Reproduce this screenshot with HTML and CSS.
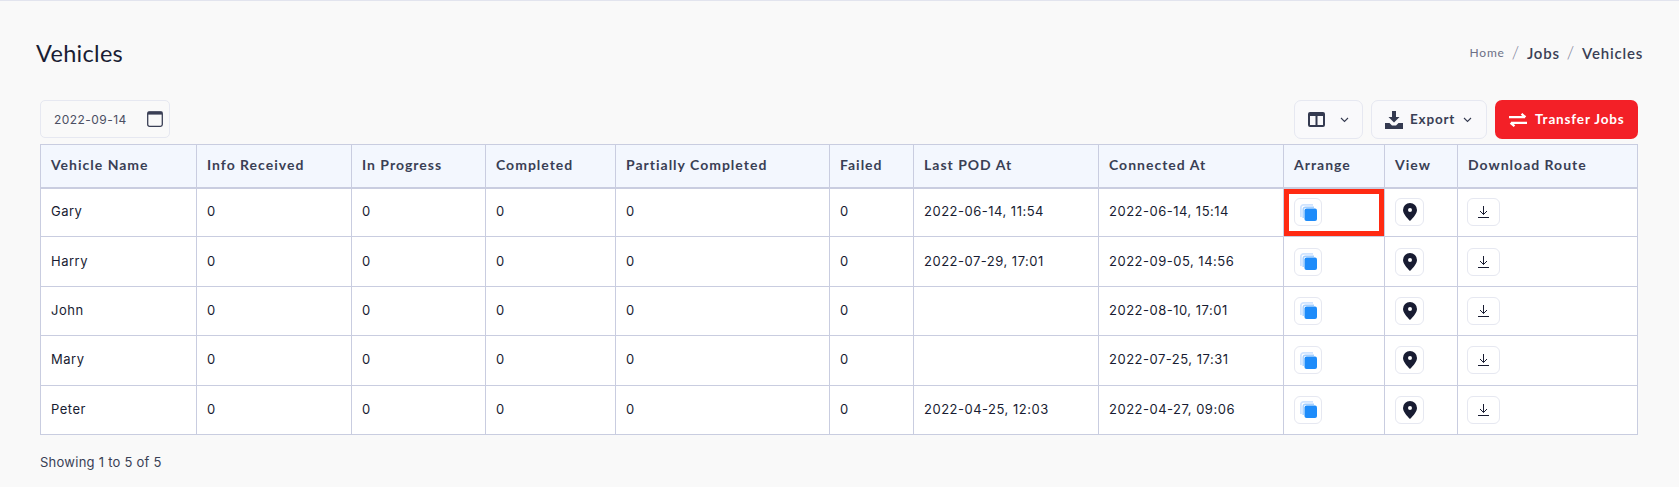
FILE: index.html
```html
<!DOCTYPE html>
<html lang="en">
<head>
<meta charset="utf-8">
<title>Vehicles</title>
<link rel="stylesheet" href="styles.css">
</head>
<body>
<svg class="sprite" width="0" height="0" aria-hidden="true">
  <symbol id="i-arr" viewBox="0 0 17 17"><path fill="none" stroke="#cfe4ff" stroke-width="1.800" d="M.9 13V3.500A2.600 2.600 0 0 1 3.500 .9H13"/><path fill="none" stroke="#a5d0ff" stroke-width="1.400" d="M3.200 14V5.500A2.300 2.300 0 0 1 5.500 3.200H14"/><rect x="4.500" y="4.500" width="12.500" height="12.500" rx="2" fill="#1e8cfa"/></symbol>
  <symbol id="i-pin" viewBox="0 0 14 18"><path fill="#181c32" fill-rule="evenodd" d="M7 0a7 7 0 0 1 7 7c0 3.500-3.500 7.500-7 11C3.500 14.500 0 10.500 0 7a7 7 0 0 1 7-7zm0 5a2 2 0 1 0 0 4 2 2 0 0 0 0-4z"/></symbol>
  <symbol id="i-dl" viewBox="0 0 11 12"><path fill="none" stroke="#181c32" d="M5.500 0v8.500M2 5l3.500 3.500L9 5M0 11.500h11"/></symbol>
</svg>
<main class="page">
  <header class="page-head">
    <h1 class="title">Vehicles</h1>
    <nav class="crumbs">
      <span class="crumb-home">Home</span><span class="sep">/</span><span class="crumb">Jobs</span><span class="sep">/</span><span class="crumb">Vehicles</span>
    </nav>
  </header>
  <section class="toolbar">
    <div class="date-box">
      <span class="date-text">2022-09-14</span>
      <svg class="cal" width="16" height="16" viewBox="0 0 16 16"><rect x=".7" y="1" width="14.600" height="14.300" rx="1.800" fill="none" stroke="#3a3f55" stroke-width="1.300"/><rect x=".7" y=".6" width="14.600" height="3" fill="#3a3f55"/></svg>
    </div>
    <div class="actions">
      <button class="btn btn-cols">
        <svg width="17" height="15" viewBox="0 0 17 15"><path fill="#343a50" fill-rule="evenodd" d="M2 0h13a2 2 0 0 1 2 2v11a2 2 0 0 1-2 2H2a2 2 0 0 1-2-2V2a2 2 0 0 1 2-2zM2 4v9h5.500V4zM9.500 4v9H15V4z"/></svg>
        <svg class="chev" width="9" height="6" viewBox="0 0 9 6"><path d="M1 1l3.500 3.500L8 1" fill="none" stroke="#343a50" stroke-width="1.100"/></svg>
      </button>
      <button class="btn btn-export">
        <svg width="18" height="18" viewBox="0 0 18 18"><path fill="#343a50" d="M7 0h4v6h3.500L9 11.500 3.500 6H7zM0 12h4.500L7 14.500h4L13.500 12H18v6H0z"/></svg>
        <span class="btn-label">Export</span>
        <svg class="chev" width="9" height="6" viewBox="0 0 9 6"><path d="M1 1l3.500 3.500L8 1" fill="none" stroke="#343a50" stroke-width="1.100"/></svg>
      </button>
      <button class="btn-red">
        <svg width="18" height="14" viewBox="0 0 18 14"><path fill="none" stroke="#fff" stroke-width="2.200" d="M0 4.200h16M12.500 .8l4 3.400M18 9.800H2M5.500 13.200l-4-3.400"/></svg>
        <span class="btn-label">Transfer Jobs</span>
      </button>
    </div>
  </section>
  <table class="grid">
    <colgroup>
      <col class="c1"><col class="c2"><col class="c3"><col class="c4"><col class="c5"><col class="c6"><col class="c7"><col class="c8"><col class="c9"><col class="c10"><col class="c11">
    </colgroup>
    <thead>
      <tr><th>Vehicle Name</th><th>Info Received</th><th>In Progress</th><th>Completed</th><th>Partially Completed</th><th>Failed</th><th>Last POD At</th><th>Connected At</th><th>Arrange</th><th>View</th><th>Download Route</th></tr>
    </thead>
    <tbody>
      <tr><td>Gary</td><td>0</td><td>0</td><td>0</td><td>0</td><td>0</td><td>2022-06-14, 11:54</td><td>2022-06-14, 15:14</td>
        <td class="act arr-cell"><div class="marked"></div><button class="ic ic-arr"><svg width="17" height="17"><use href="#i-arr"/></svg></button></td>
        <td class="act"><button class="ic ic-pin"><svg width="14" height="18"><use href="#i-pin"/></svg></button></td>
        <td class="act act-dl"><button class="ic ic-dl"><svg width="11" height="12"><use href="#i-dl"/></svg></button></td></tr>
      <tr><td>Harry</td><td>0</td><td>0</td><td>0</td><td>0</td><td>0</td><td>2022-07-29, 17:01</td><td>2022-09-05, 14:56</td>
        <td class="act"><button class="ic ic-arr"><svg width="17" height="17"><use href="#i-arr"/></svg></button></td>
        <td class="act"><button class="ic ic-pin"><svg width="14" height="18"><use href="#i-pin"/></svg></button></td>
        <td class="act act-dl"><button class="ic ic-dl"><svg width="11" height="12"><use href="#i-dl"/></svg></button></td></tr>
      <tr><td>John</td><td>0</td><td>0</td><td>0</td><td>0</td><td>0</td><td></td><td>2022-08-10, 17:01</td>
        <td class="act"><button class="ic ic-arr"><svg width="17" height="17"><use href="#i-arr"/></svg></button></td>
        <td class="act"><button class="ic ic-pin"><svg width="14" height="18"><use href="#i-pin"/></svg></button></td>
        <td class="act act-dl"><button class="ic ic-dl"><svg width="11" height="12"><use href="#i-dl"/></svg></button></td></tr>
      <tr><td>Mary</td><td>0</td><td>0</td><td>0</td><td>0</td><td>0</td><td></td><td>2022-07-25, 17:31</td>
        <td class="act"><button class="ic ic-arr"><svg width="17" height="17"><use href="#i-arr"/></svg></button></td>
        <td class="act"><button class="ic ic-pin"><svg width="14" height="18"><use href="#i-pin"/></svg></button></td>
        <td class="act act-dl"><button class="ic ic-dl"><svg width="11" height="12"><use href="#i-dl"/></svg></button></td></tr>
      <tr><td>Peter</td><td>0</td><td>0</td><td>0</td><td>0</td><td>0</td><td>2022-04-25, 12:03</td><td>2022-04-27, 09:06</td>
        <td class="act"><button class="ic ic-arr"><svg width="17" height="17"><use href="#i-arr"/></svg></button></td>
        <td class="act"><button class="ic ic-pin"><svg width="14" height="18"><use href="#i-pin"/></svg></button></td>
        <td class="act act-dl"><button class="ic ic-dl"><svg width="11" height="12"><use href="#i-dl"/></svg></button></td></tr>
    </tbody>
  </table>
  <p class="count">Showing 1 to 5 of 5</p>
</main>
</body>
</html>
```
FILE: styles.css
```css
* { box-sizing: border-box; }
html, body { margin: 0; padding: 0; }
body { background: #f9f9f9; font-family: Inter, "Liberation Sans", sans-serif; color: #181c32; height: 487px; overflow: hidden; border-top: 1px solid #e2e4ee; }
.sprite { position: absolute; }
.page { padding: 0 42px 0 40px; }
.page-head { display: flex; justify-content: space-between; align-items: center; height: 100px; padding-top: 3px; margin-left: -4px; margin-right: -6px; }
.title { margin: 0; font: 400 23.500px/30px Lato, sans-serif; color: #1a1d33; letter-spacing: 0.3px; }
.crumbs { display: flex; align-items: center; font: 600 15px/18px Lato, sans-serif; color: #3a3f55; letter-spacing: .8px; }
.crumb-home { font: 400 12px/18px Lato, sans-serif; color: #6c7086; }
.sep { font-weight: 300; font-size: 17px; color: #7e8299; margin: 0 7px; }
.toolbar { display: flex; justify-content: space-between; align-items: flex-end; height: 43px; }
.date-box { display: flex; align-items: center; width: 130px; height: 38px; border: 1px solid #e6e8f1; border-radius: 5px; padding: 0 6px 0 13px; margin-bottom: 6px; justify-content: space-between; }
.date-text { font-size: 12px; color: #4b4f63; letter-spacing: .45px; }
.actions { display: flex; gap: 8px; margin-bottom: 5px; margin-right: -1px; }
.btn { display: flex; align-items: center; height: 39px; background: #f9f9fb; border: 1px solid #e6e8f1; border-radius: 7px; font: 700 13.500px Lato, sans-serif; color: #3a3f55; letter-spacing: .8px; }
.btn-label { margin-bottom: 2px; }
.btn-cols { width: 69px; padding: 0 0 0 13px; gap: 15px; }
.btn-export { width: 116px; padding: 0 0 0 13px; gap: 7px; }
.btn-export .chev { margin-left: 1px; }
.btn-red { display: flex; align-items: center; gap: 8px; width: 143px; height: 39px; padding: 0 0 0 14px; background: #f32027; color: #fff; border: 0; border-radius: 7px; font: 700 13.500px Lato, sans-serif; letter-spacing: .85px; }
.grid { width: 100%; table-layout: fixed; border-collapse: collapse; background: #fff; }
.c1 { width: 156px; } .c2 { width: 155px; } .c3 { width: 134px; } .c4 { width: 130px; } .c5 { width: 214px; } .c6 { width: 84px; } .c7 { width: 185px; } .c8 { width: 185px; } .c9 { width: 101px; } .c10 { width: 73px; } .c11 { width: 180px; }
th, td { border: 1px solid #c9cde0; padding: 0 10px; text-align: left; }
th { height: 43px; padding-bottom: 2px; background: #f3f7fe; border-bottom-width: 2px; font: 700 14px Lato, sans-serif; color: #3a3f55; letter-spacing: 1px; }
td { height: 49.400px; padding-bottom: 2px; font-size: 13px; letter-spacing: .5px; color: #181c32; }
td.act { padding-bottom: 0; }
td.act-dl { padding-left: 9px; }
.arr-cell { position: relative; }
.marked { position: absolute; left: 0; top: 0; right: 0; bottom: 0; border: 5px solid #ff2a12; }
.ic { display: flex; align-items: center; justify-content: center; height: 28px; background: #fff; border: 1px solid #e6e8f1; border-radius: 6px; padding: 0; position: relative; }
.ic-arr { width: 28px; }
.ic-pin { width: 29px; }
.ic-dl { width: 33px; }
.count { margin: 19px 0 0; font-size: 13px; letter-spacing: .25px; color: #3a3f55; }
```
